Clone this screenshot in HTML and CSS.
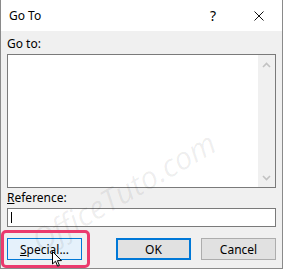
FILE: index.html
```html
<!DOCTYPE html>
<html lang="en">
<head>
    <title>Go To</title>
    <meta charset="UTF-8">
    <link rel="stylesheet" href="styles.css">
</head>
<body>
    <div class="window">
        <div class="titlebar">
            <span class="title">Go To</span>
            <div class="title-buttons">
                <span class="title-btn">?</span>
                <span class="title-btn">
                    <svg width="10" height="10" viewBox="0 0 10 10"><path d="M0.5 0.5 L9.5 9.5 M9.5 0.5 L0.5 9.5" stroke="#111" stroke-width="1" fill="none"/></svg>
                </span>
            </div>
        </div>

        <div class="content">
            <label class="label">Go to:</label>
            <div class="listbox">
                <div class="list-area"></div>
                <div class="scrollbar">
                    <svg width="9" height="6" viewBox="0 0 9 6"><path d="M1 5 L4.5 1.5 L8 5" stroke="#c2c2c2" stroke-width="1.6" fill="none"/></svg>
                    <svg width="9" height="6" viewBox="0 0 9 6"><path d="M1 1 L4.5 4.5 L8 1" stroke="#c2c2c2" stroke-width="1.6" fill="none"/></svg>
                </div>
            </div>

            <label class="label label-ref"><u>R</u>eference:</label>
            <div class="textbox"><span class="caret"></span></div>

            <div class="button-row">
                <button class="btn btn-hover"><u>S</u>pecial...</button>
                <div class="button-group">
                    <button class="btn btn-default">OK</button>
                    <button class="btn">Cancel</button>
                </div>
            </div>
        </div>

        <div class="watermark">OfficeTuto.com</div>
        <div class="highlight"></div>
        <svg class="cursor" width="11" height="17" viewBox="0 0 11 17">
            <path d="M0.5 0.5 L0.5 13 L3.5 10.2 L5.6 15.2 L7.4 14.4 L5.4 9.6 L9.5 9.6 Z" fill="#fff" stroke="#000" stroke-width="1"/>
        </svg>
    </div>
</body>
</html>
```

FILE: styles.css
```css
body {
    margin: 0;
    padding: 0;
    font-family: "Noto Sans", sans-serif;
    font-size: 12px;
    color: #000;
}

.window {
    position: relative;
    width: 283px;
    height: 269px;
    box-sizing: border-box;
    border: 1px solid #8a8a8a;
    border-top: none;
    background-color: #f0f0f0;
    overflow: hidden;
}

.titlebar {
    height: 31px;
    background-color: #fff;
    display: flex;
    align-items: center;
    justify-content: space-between;
}

.title {
    padding-left: 8px;
    font-size: 12px;
}

.title-buttons {
    display: flex;
    height: 100%;
}

.title-btn {
    width: 46px;
    display: flex;
    align-items: center;
    justify-content: center;
    font-size: 14px;
}

.content {
    padding: 5px 6px 0 6px;
    display: flex;
    flex-direction: column;
}

.label {
    line-height: 16px;
    height: 16px;
}

.label-ref {
    margin-top: 2px;
}

.listbox {
    margin-top: 2px;
    height: 134px;
    box-sizing: border-box;
    border: 1px solid #7a7a7a;
    display: flex;
    background-color: #fff;
}

.list-area {
    flex: 1;
}

.scrollbar {
    width: 17px;
    background-color: #f0f0f0;
    display: flex;
    flex-direction: column;
    justify-content: space-between;
    align-items: center;
    padding: 7px 0 6px 0;
}

.textbox {
    margin-top: 2px;
    height: 19px;
    box-sizing: border-box;
    border: 1px solid #7a7a7a;
    background-color: #fff;
    padding: 3px 3px;
}

.caret {
    display: block;
    width: 1px;
    height: 11px;
    background-color: #000;
}

.button-row {
    margin-top: 11px;
    display: flex;
    justify-content: space-between;
}

.button-group {
    display: flex;
    gap: 10px;
}

.btn {
    width: 75px;
    height: 22px;
    box-sizing: border-box;
    border: 1px solid #adadad;
    background-color: #e1e1e1;
    font-family: "Noto Sans", sans-serif;
    font-size: 12px;
    padding: 0;
    color: #000;
}

.btn-hover {
    border-color: #0078d7;
    background-color: #e5f1fb;
}

.btn-default {
    border: 2px solid #0078d7;
}

.watermark {
    position: absolute;
    left: 43px;
    top: 220px;
    font-family: "Open Sans", sans-serif;
    font-style: italic;
    font-size: 31px;
    line-height: 40px;
    color: rgba(0, 0, 0, 0.07);
    transform: rotate(-30deg);
    transform-origin: left bottom;
    white-space: nowrap;
    pointer-events: none;
}

.highlight {
    position: absolute;
    left: 0;
    top: 230px;
    width: 89px;
    height: 38px;
    box-sizing: border-box;
    border: 3px solid #eb3a6e;
    border-radius: 5px;
}

.cursor {
    position: absolute;
    left: 51px;
    top: 251px;
}
```
